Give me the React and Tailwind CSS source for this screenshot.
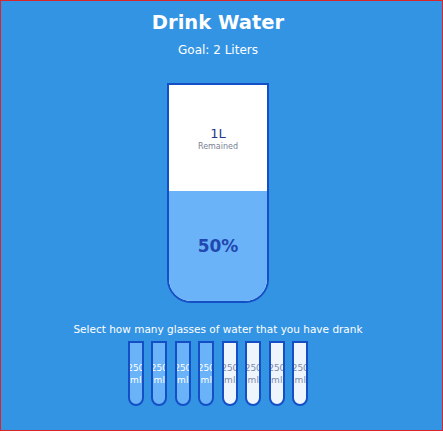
export default function App() {
  const cups = [true, true, true, true, false, false, false, false];
  return (
    <div
      className="w-[443px] h-[431px] border border-[#d8262a] bg-[#3494e4] flex flex-col items-center text-white overflow-hidden pr-[7px]"
      style={{ fontFamily: '"DejaVu Sans", sans-serif' }}
    >
      <h1 className="mt-[9px] text-[19.5px] leading-[26px] font-bold">Drink Water</h1>
      <div className="mt-[6px] text-[12px] leading-[16px]">Goal: 2 Liters</div>
      <div className="mt-[25px] w-[102px] h-[220px] border-2 border-[#144fc6] rounded-b-[24px] bg-white flex flex-col overflow-hidden">
        <div className="flex-1 flex flex-col items-center justify-center pt-[2px] text-[#1f3a8a]">
          <span className="text-[13px] leading-[16px]">1L</span>
          <span className="text-[8px] leading-[10px] text-[#7a7f94]">Remained</span>
        </div>
        <div className="h-[110px] bg-[#6ab3f8] flex items-center justify-center pt-[2px] text-[#2147b0] text-[17px] font-bold">
          50%
        </div>
      </div>
      <div className="mt-[19px] text-[10.5px] leading-[14px]">Select how many glasses of water that you have drank</div>
      <div className="mt-[5px] flex gap-[7.5px]">
        {cups.map((full, i) => (
          <div
            key={i}
            className={`w-[16px] h-[65px] border-2 border-[#144fc6] rounded-b-[8px] overflow-hidden flex items-center justify-center ${full ? "bg-[#6ab3f8] text-white" : "bg-[#eef5fd] text-[#7e8aa8]"}`}
          >
            <span className="text-[9px] leading-[12px] text-center w-[20px] shrink-0">250 ml</span>
          </div>
        ))}
      </div>
    </div>
  );
}
